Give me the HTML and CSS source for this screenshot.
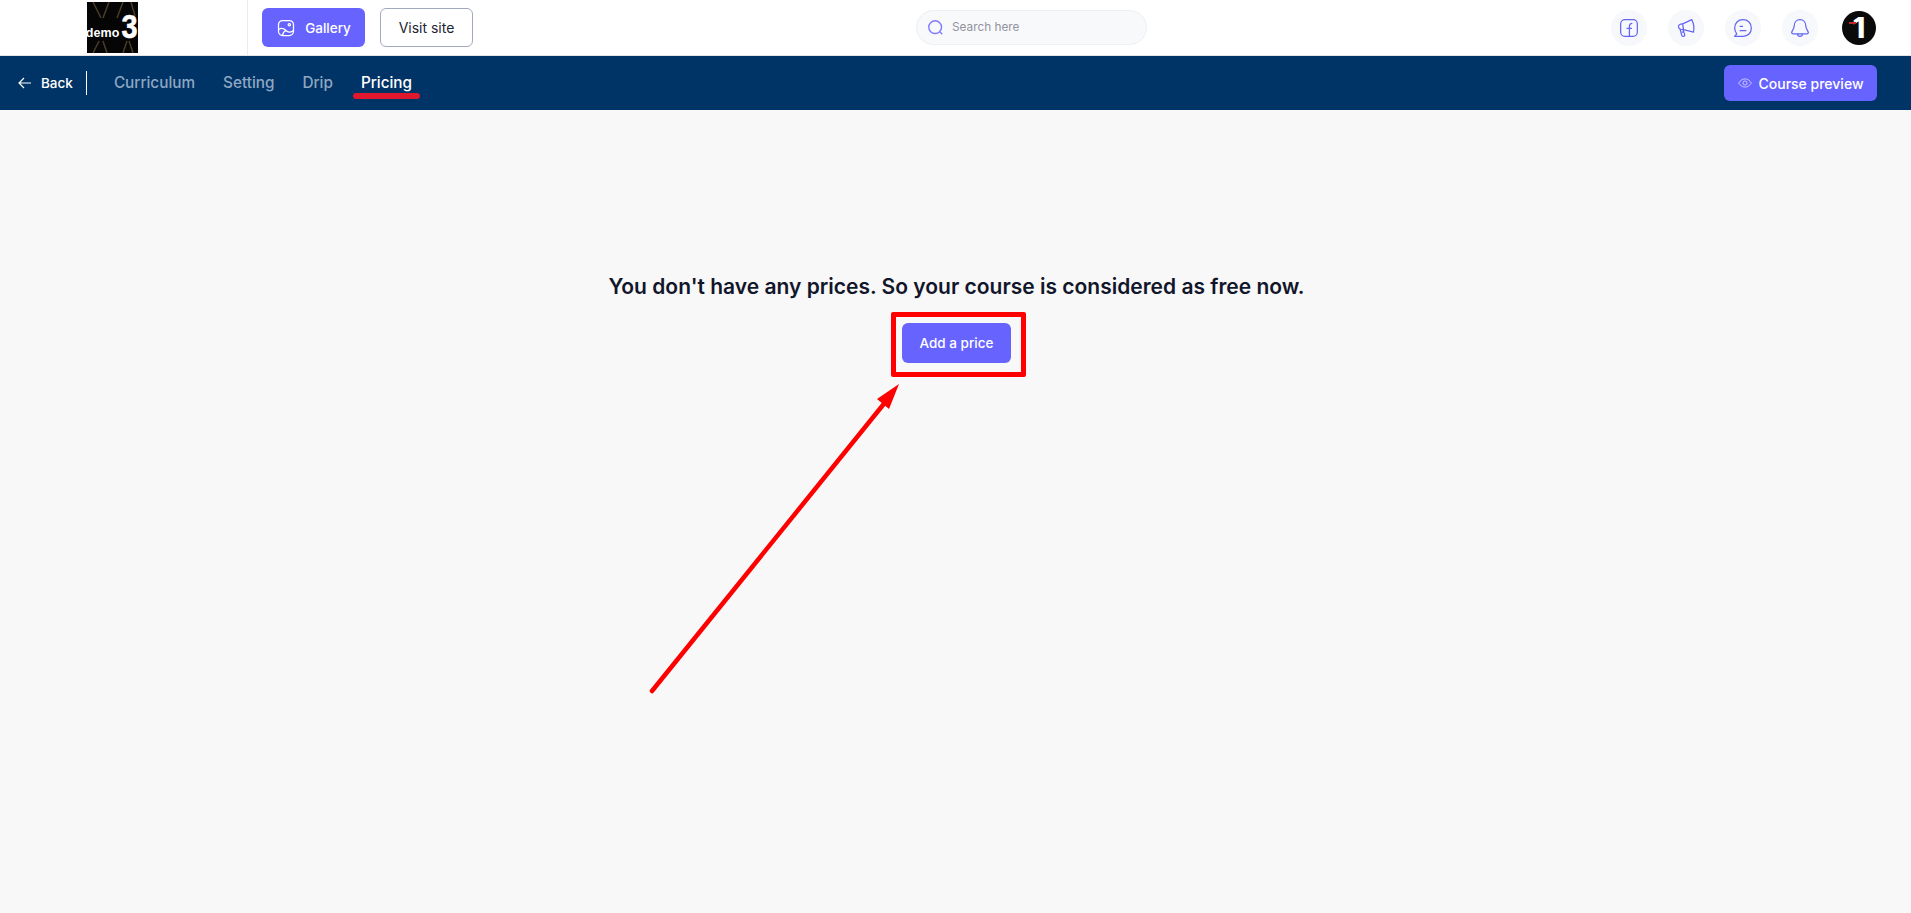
FILE: index.html
```html
<!DOCTYPE html>
<html lang="en">
  <head>
    <meta charset="UTF-8" />
    <meta name="viewport" content="width=device-width, initial-scale=1.0" />
    <title>Course - Pricing</title>
    <link rel="stylesheet" href="styles.css">
  </head>
  <body>
    <header class="topbar">
      <div class="logoCell">
        <div class="logo">
          <svg class="logoBg" viewBox="0 0 51 51">
            <path d="M6 0l8 16M22 0l-6 16M36 0l-6 16M44 0l4 14M6 51l6-12M20 51l-4-12M36 51l4-12M46 51l-4-12" stroke="#4a3d27" stroke-width="1.5" fill="none" />
          </svg>
          <span class="logoWord">demo</span><span class="logoNum">3</span>
        </div>
      </div>
      <button class="btn btnGallery">
        <svg class="ico" viewBox="0 0 24 24" fill="none" stroke="#fff" stroke-width="1.5">
          <rect x="3" y="3" width="18" height="18" rx="5" />
          <path d="M3 14c4-3 7-1 9 1s6 3 9 0M8 21c0-3 2-5 4-6" />
          <circle cx="16" cy="8" r="1.4" />
        </svg>
        Gallery
      </button>
      <button class="btn btnOutline">Visit site</button>
      <div class="search">
        <svg class="searchIco" viewBox="0 0 24 24" fill="none" stroke="#7f7bff" stroke-width="2">
          <circle cx="11.5" cy="11.5" r="9" />
          <path d="M18.5 18.5l3 3" />
        </svg>
        <span class="searchText">Search here</span>
      </div>
      <div class="actions">
        <div class="circle">
          <svg class="ico18" viewBox="0 0 24 24" fill="none" stroke="#6366f1" stroke-width="1.5">
            <rect x="2" y="2" width="20" height="20" rx="5" />
            <path d="M12.500 22v-12c0-2.400 1-3.500 3.500-3.500M9 12.500h6.500" />
          </svg>
        </div>
        <div class="circle">
          <svg class="ico18" viewBox="0 0 24 24" fill="none" stroke="#6366f1" stroke-width="1.5" stroke-linejoin="round">
            <path d="M8 7l11-5c2 4 3 10 2 15l-12-3z" />
            <path d="M8 7c-3 0-5 1-5 3.500s2 3.500 6 3.500" />
            <path d="M5 14l2 7c1 2 4 1 3.500-1l-2-6M7 17l3-1" />
          </svg>
        </div>
        <div class="circle">
          <svg class="ico18" viewBox="0 0 24 24" fill="none" stroke="#6366f1" stroke-width="1.5" stroke-linejoin="round">
            <path d="M12 2c6 0 10 4 10 10s-4 10-10 10H2l2.500-3C3 17 2 15 2 12 2 6 6 2 12 2z" />
            <path d="M8 10h4M8 15h8" />
          </svg>
        </div>
        <div class="circle">
          <svg class="ico18" viewBox="0 0 24 24" fill="none" stroke="#6366f1" stroke-width="1.5" stroke-linejoin="round">
            <path d="M12 2c4.500 0 7 3.500 7 7.500 0 4 3 6 3 8 0 1-1 1.500-2 1.500H4c-1 0-2-.5-2-1.500 0-2 3-4 3-8C5 5.500 7.500 2 12 2z" />
            <path d="M9 19c0 2 1.500 3 3 3s3-1 3-3" />
          </svg>
        </div>
        <div class="avatar"><i class="avatarDash"></i><span>1</span></div>
      </div>
    </header>

    <nav class="subbar">
      <a class="back">
        <svg class="backIco" viewBox="0 0 14 14" fill="none" stroke="#fff" stroke-width="1.2">
          <path d="M13 7H1M6 2L1 7l5 5" />
        </svg>
        Back
      </a>
      <span class="sep"></span>
      <a class="tab">Curriculum</a>
      <a class="tab">Setting</a>
      <a class="tab">Drip</a>
      <a class="tab tabActive">Pricing</a>
      <button class="btn btnPreview">
        <svg class="eye" viewBox="0 0 24 16" fill="none" stroke="#d5d4ff" stroke-width="1.5">
          <path d="M1 8c3-4.500 7-7 11-7s8 2.500 11 7c-3 4.500-7 7-11 7S4 12.500 1 8z" />
          <circle cx="12" cy="8" r="3.500" />
        </svg>
        Course preview
      </button>
    </nav>

    <main class="content">
      <h2 class="emptyTitle">You don't have any prices. So your course is considered as free now.</h2>
      <div class="redBox">
        <button class="btn btnAdd">Add a price</button>
      </div>
      <!-- annotation arrow drawn over the page -->
      <svg class="arrow" viewBox="0 0 280 330">
        <path d="M12 321L247 30" stroke="#ff0000" stroke-width="4.500" stroke-linecap="round" fill="none" />
        <path d="M259 14L237 29L249 39z" fill="#ff0000" />
      </svg>
    </main>
  </body>
</html>
```

FILE: styles.css
```css
* {
  padding: 0;
  margin: 0;
  box-sizing: border-box;
}
body {
  height: 100vh;
  overflow: hidden;
  display: flex;
  flex-direction: column;
  background-color: #f8f8f8;
  font-family: "Inter", "Open Sans", sans-serif;
}
button {
  font-family: inherit;
}
.topbar {
  height: 56px;
  display: flex;
  align-items: center;
  background-color: #ffffff;
  border-bottom: 1px solid #e4e4e4;
  padding-right: 35px;
}
.logoCell {
  width: 248px;
  height: 55px;
  padding-left: 87px;
  display: flex;
  align-items: center;
  border-right: 1px solid #ececec;
  margin-right: 14px;
}
.logo {
  width: 51px;
  height: 51px;
  background-color: #050505;
  position: relative;
  display: flex;
  align-items: center;
  justify-content: center;
  color: #ffffff;
  font-family: "Liberation Sans", sans-serif;
  font-weight: 700;
  overflow: hidden;
}
.logoBg {
  position: absolute;
  top: 0;
  left: 0;
  width: 51px;
  height: 51px;
}
.logoWord {
  position: relative;
  font-size: 12.5px;
  margin-top: 11px;
  letter-spacing: 0.1px;
}
.logoNum {
  position: relative;
  font-size: 34px;
  line-height: 40px;
  margin-top: -4px;
  margin-left: 1px;
  transform: scaleX(0.85);
  -webkit-text-stroke: 0.6px #ffffff;
}
.btn {
  border: none;
  border-radius: 6px;
  display: flex;
  align-items: center;
  justify-content: center;
  cursor: pointer;
  font-weight: 500;
}
.btnGallery {
  width: 103px;
  height: 39px;
  gap: 9px;
  font-size: 13.5px;
  background-color: #6763ff;
  color: #ffffff;
}
.btnOutline {
  width: 93px;
  height: 39px;
  margin-left: 15px;
  font-size: 14px;
  font-weight: 400;
  background-color: #ffffff;
  color: #1d2433;
  border: 1px solid #a3a9bd;
}
.ico {
  width: 20px;
  height: 20px;
}
.search {
  width: 231px;
  height: 35px;
  margin-left: 443px;
  margin-bottom: 1px;
  padding-left: 10px;
  display: flex;
  align-items: center;
  gap: 8px;
  background-color: #f8f9fb;
  border: 1px solid #eeeff3;
  border-radius: 18px;
}
.searchIco {
  width: 17px;
  height: 17px;
}
.searchText {
  font-size: 11.8px;
  color: #93939e;
}
.actions {
  margin-left: auto;
  display: flex;
  align-items: center;
  gap: 21px;
}
.circle {
  width: 36px;
  height: 36px;
  border-radius: 50%;
  background-color: #f7f8fb;
  display: flex;
  align-items: center;
  justify-content: center;
}
.ico18 {
  width: 20px;
  height: 20px;
}
.avatar {
  width: 34px;
  height: 34px;
  margin-left: 3px;
  border-radius: 50%;
  background-color: #0a0a0a;
  color: #ffffff;
  position: relative;
  display: flex;
  align-items: center;
  justify-content: center;
  font-size: 29px;
  line-height: 30px;
  font-weight: 800;
}
.avatarDash {
  position: absolute;
  top: 11px;
  left: 7px;
  width: 7px;
  height: 2px;
  background-color: #c4242c;
}
.subbar {
  height: 54px;
  display: flex;
  align-items: center;
  background-color: #003366;
  padding: 0 34px 0 18px;
}
.back {
  display: flex;
  align-items: center;
  gap: 9px;
  margin-bottom: 1px;
  color: #ffffff;
  font-size: 13.5px;
  font-weight: 500;
}
.backIco {
  width: 14px;
  height: 14px;
}
.sep {
  width: 1px;
  height: 24px;
  background-color: #ffffff;
  margin: 0 27px 0 13px;
}
.tab {
  position: relative;
  margin-right: 28px;
  margin-bottom: 1px;
  font-size: 15.3px;
  font-weight: 500;
  color: #8ea7c2;
}
.tabActive {
  color: #ffffff;
}
.tabActive::after {
  content: "";
  position: absolute;
  left: -8px;
  right: -8px;
  bottom: -7px;
  height: 6px;
  border-radius: 3px;
  background-color: #e0182d;
}
.btnPreview {
  width: 153px;
  height: 36px;
  margin-left: auto;
  gap: 7px;
  font-size: 14px;
  background-color: #6763ff;
  color: #ffffff;
}
.eye {
  width: 14px;
  height: 10px;
}
.content {
  flex: 1;
  position: relative;
  display: flex;
  flex-direction: column;
  align-items: center;
  padding-top: 161px;
  padding-left: 2px;
}
.emptyTitle {
  font-size: 21px;
  line-height: 32px;
  font-weight: 600;
  color: #11162a;
}
.redBox {
  margin-top: 9px;
  margin-left: 4px;
  padding: 6px 10px 9px 6px;
  border: 5px solid #ff0000;
  border-radius: 2px;
}
.btnAdd {
  width: 109px;
  height: 40px;
  font-size: 13.5px;
  background-color: #6763ff;
  color: #ffffff;
}
.arrow {
  position: absolute;
  left: 640px;
  top: 260px;
  width: 280px;
  height: 330px;
}
```
